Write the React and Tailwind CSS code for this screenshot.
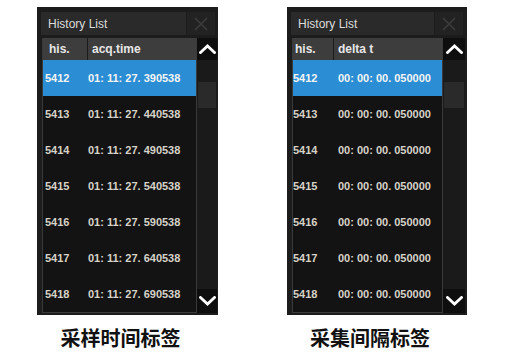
import React from "react";

const Chevron = ({ up }) => (
  <svg width="17" height="10" viewBox="0 0 17 10">
    <polyline
      points={up ? "1.5,8.5 8.5,2 15.5,8.5" : "1.5,1.5 8.5,8 15.5,1.5"}
      fill="none"
      stroke="#ffffff"
      strokeWidth="2.8"
      strokeLinecap="square"
    />
  </svg>
);

const CloseX = () => (
  <svg width="14" height="14" viewBox="0 0 14 14">
    <path d="M1 1 L13 13 M13 1 L1 13" stroke="#3c3c3c" strokeWidth="1.6" />
  </svg>
);

function Panel({ col2, rows, wide }) {
  return (
    <div
      className={`${wide ? "w-[181px]" : "w-[180px]"} h-[308px] bg-[#1c1c1c] pt-[5px] pl-[4px] ${wide ? "pr-[1px]" : "pr-[2px]"} pb-[2px] flex flex-col`}
    >
      <div className="h-[23px] flex gap-[1px] mr-[2px]">
        <div className="flex-1 bg-[#2a2a2a] pl-[7px] flex items-center text-[12px] text-[#dcdcdc] font-['Liberation_Sans',Arial,sans-serif]">
          History List
        </div>
        <div className="w-[28px] bg-[#222222] flex items-center justify-center">
          <CloseX />
        </div>
      </div>
      <div className="mt-[3px] flex flex-1">
        <div
          className={`ml-[1px] ${wide ? "w-[155px]" : "w-[151px]"} border-l border-r border-b border-[#3a3a3a] bg-[#131313] flex flex-col font-['Liberation_Sans',Arial,sans-serif] font-bold`}
        >
          <div className="h-[22px] bg-[#3d3d3d] flex text-[12px] text-[#e6e6e6]">
            <div className={`${wide ? "w-[44px] pl-[6px]" : "w-[40px] pl-[2px]"} flex items-center`}>his.</div>
            <div className="w-[1px] bg-[#1c1c1c]" />
            <div className="flex-1 pl-[4px] flex items-center">{col2}</div>
          </div>
          {rows.map(([id, t], i) => (
            <div
              key={id}
              className={`h-[36px] flex items-center text-[11px] ${i === 0 ? "bg-[#2b8dd3] text-[#f4f4f4]" : "text-[#d6d2c8]"}`}
            >
              <div className={`${wide ? "w-[44px] pl-[2px]" : "w-[44px] pl-[0px]"}`}>{id}</div>
              <div className="flex-1 pl-[1px] whitespace-pre">{t}</div>
            </div>
          ))}
        </div>
        <div className="flex-1 flex flex-col">
          <div className="h-[22px] bg-[#0e0e0e] flex items-center justify-center">
            <Chevron up />
          </div>
          <div className="flex-1 bg-[#1a1a1a] pt-[22px] px-[1px]">
            <div className="h-[26px] bg-[#2a2a2a]" />
          </div>
          <div className="h-[24px] bg-[#0e0e0e] flex items-center justify-center">
            <Chevron />
          </div>
        </div>
      </div>
    </div>
  );
}

const leftRows = [
  ["5412", "01: 11: 27. 390538"],
  ["5413", "01: 11: 27. 440538"],
  ["5414", "01: 11: 27. 490538"],
  ["5415", "01: 11: 27. 540538"],
  ["5416", "01: 11: 27. 590538"],
  ["5417", "01: 11: 27. 640538"],
  ["5418", "01: 11: 27. 690538"],
];

const rightRows = ["5412", "5413", "5414", "5415", "5416", "5417", "5418"].map((id) => [
  id,
  "00: 00: 00. 050000",
]);

export default function App() {
  return (
    <div className="w-[512px] h-[360px] bg-white flex pt-[7px] pl-[37px] gap-[69px]">
      <div className="flex flex-col w-[181px]">
        <Panel col2="acq.time" rows={leftRows} wide />
        <div className="mt-[8px] pr-[14px] text-center text-[20px] font-bold text-[#111] font-['Noto_Sans_CJK_SC',sans-serif]">
          采样时间标签
        </div>
      </div>
      <div className="flex flex-col w-[180px]">
        <Panel col2="delta t" rows={rightRows} />
        <div className="mt-[8px] pr-[14px] text-center text-[20px] font-bold text-[#111] font-['Noto_Sans_CJK_SC',sans-serif]">
          采集间隔标签
        </div>
      </div>
    </div>
  );
}
